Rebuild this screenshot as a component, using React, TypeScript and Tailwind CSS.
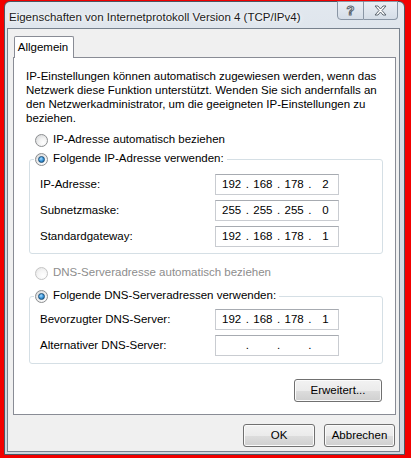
import { Fragment } from 'react';

const Radio = ({ checked = false, disabled = false }: { checked?: boolean; disabled?: boolean }) => (
  <span
    className={
      'flex h-[13px] w-[13px] shrink-0 items-center justify-center rounded-full border ' +
      (disabled
        ? 'border-[#c4c4c4] bg-[radial-gradient(circle_at_65%_70%,#ffffff_0%,#f6f6f6_45%,#e2e2e2_100%)]'
        : 'border-[#8c8e90] bg-[radial-gradient(circle_at_65%_70%,#ffffff_0%,#f2f2f2_40%,#cfd1d3_100%)]')
    }
  >
    {checked && (
      <span className="h-[7px] w-[7px] rounded-full border border-[#1b4d75] bg-[radial-gradient(circle_at_40%_35%,#a9dcff_0%,#3b97dc_50%,#145a90_100%)]" />
    )}
  </span>
);

const IpField = ({ parts }: { parts: string[] }) => (
  <div className="flex h-[21px] w-[124px] items-center border border-[#c9ccd1] border-t-[#a7abb1] bg-white pl-[3px]">
    {parts.map((p, i) => (
      <Fragment key={i}>
        <span className="w-[26px] text-center">{p}</span>
        {i < 3 && <span className="w-[6px] text-center">.</span>}
      </Fragment>
    ))}
  </div>
);

const Button = ({ label, w }: { label: string; w: string }) => (
  <div
    className={
      'flex h-[23px] items-center justify-center rounded-[3px] border border-[#707070] shadow-[inset_0_0_0_1px_#fbfbfb] bg-[linear-gradient(#f2f2f2_0%,#ebebeb_50%,#dddddd_51%,#cfcfcf_100%)] ' +
      w
    }
  >
    {label}
  </div>
);

const Row = ({ label, parts }: { label: string; parts: string[] }) => (
  <div className="grid grid-cols-[175px_124px] items-center">
    <span>{label}</span>
    <IpField parts={parts} />
  </div>
);

export default function App() {
  return (
    <div className="flex h-[458px] w-[411px] flex-col bg-[#f20000] pb-[3px] pl-[4px] pr-[6px] pt-[1px] font-['Liberation_Sans',sans-serif] text-[11.5px] text-black">
      <div className="flex flex-1 flex-col rounded-t-[6px] border border-[#4d5663] bg-[linear-gradient(180deg,#e2e8ef_0%,#d3dbe4_30%,#cdd5de_100%)] pb-[2px] pl-[2px] pr-[4px]">
        {/* title bar */}
        <div className="flex h-[26px] items-start">
          <span className="mt-[7px] pl-[2px] text-[#1a1a1a] [text-shadow:0_0_6px_#ffffff,0_0_3px_#ffffff]">
            Eigenschaften von Internetprotokoll Version 4 (TCP/IPv4)
          </span>
          <div className="ml-auto flex h-[19px] -mt-px mr-[2px]">
            <div className="flex w-[27px] items-center justify-center rounded-bl-[4px] border border-[#8a96a5] bg-[linear-gradient(#e9eef4,#d5dde7)] text-[13px] font-bold text-white [-webkit-text-stroke:1px_#5d6670]">
              ?
            </div>
            <div className="flex w-[34px] items-center justify-center rounded-br-[4px] border border-l-0 border-[#8a96a5] bg-[linear-gradient(#e9eef4,#d5dde7)]">
              <svg width="13" height="11" viewBox="0 0 13 11">
                <path
                  d="M1 1h3l2.5 3 2.5-3h3l-4 4.5 4 4.5h-3L6.5 7 4 10H1l4-4.5z"
                  fill="#ffffff"
                  stroke="#5d6670"
                  strokeWidth="1"
                  strokeLinejoin="round"
                />
              </svg>
            </div>
          </div>
        </div>

        {/* client area */}
        <div className="flex flex-1 flex-col border border-[#77818d] bg-[#f0f0f0] pb-[4px] pl-[5px] pr-[3px] pt-[7px]">
          <div className="relative z-10 -mb-px ml-px flex h-[22px] w-[60px] items-center justify-center rounded-t-[2px] border border-b-0 border-[#898c95] bg-white pr-[2px]">
            Allgemein
          </div>
          <div className="flex flex-1 flex-col border border-[#898c95] bg-white pr-[12px]">
            <p className="mt-[11px] whitespace-nowrap pl-[12px] leading-[14px]">
              IP-Einstellungen können automatisch zugewiesen werden, wenn das
              <br />
              Netzwerk diese Funktion unterstützt. Wenden Sie sich andernfalls an
              <br />
              den Netzwerkadministrator, um die geeigneten IP-Einstellungen zu
              <br />
              beziehen.
            </p>

            <div className="mt-[7px] flex h-[16px] items-center gap-[5px] pl-[21px]">
              <Radio />
              <span>IP-Adresse automatisch beziehen</span>
            </div>

            <fieldset className="ml-[15px] mt-[3px] rounded-[3px] border border-[#d5dfe5] pb-[6px]">
              <legend className="ml-[4px] flex h-[16px] items-center gap-[5px] pl-px pr-[3px]">
                <Radio checked />
                <span>Folgende IP-Adresse verwenden:</span>
              </legend>
              <div className="mt-[7px] flex flex-col gap-[5px] pl-[10px]">
                <Row label="IP-Adresse:" parts={['192', '168', '178', '2']} />
                <Row label="Subnetzmaske:" parts={['255', '255', '255', '0']} />
                <Row label="Standardgateway:" parts={['192', '168', '178', '1']} />
              </div>
            </fieldset>

            <div className="mt-[11px] flex h-[16px] items-center gap-[5px] pl-[21px] text-[#8d8d8d]">
              <Radio disabled />
              <span>DNS-Serveradresse automatisch beziehen</span>
            </div>

            <fieldset className="ml-[15px] mt-[7px] rounded-[3px] border border-[#d5dfe5] pb-[7px]">
              <legend className="ml-[4px] flex h-[16px] items-center gap-[5px] pl-px pr-[3px]">
                <Radio checked />
                <span>Folgende DNS-Serveradressen verwenden:</span>
              </legend>
              <div className="mt-[5px] flex flex-col gap-[5px] pl-[10px]">
                <Row label="Bevorzugter DNS-Server:" parts={['192', '168', '178', '1']} />
                <Row label="Alternativer DNS-Server:" parts={['', '', '', '']} />
              </div>
            </fieldset>

            <div className="mt-[15px] flex justify-end pr-px">
              <Button label="Erweitert..." w="w-[88px]" />
            </div>
          </div>

          <div className="mt-[9px] flex justify-end gap-[9px] pr-[1px]">
            <Button label="OK" w="w-[72px]" />
            <Button label="Abbrechen" w="w-[71px]" />
          </div>
        </div>
      </div>
    </div>
  );
}
